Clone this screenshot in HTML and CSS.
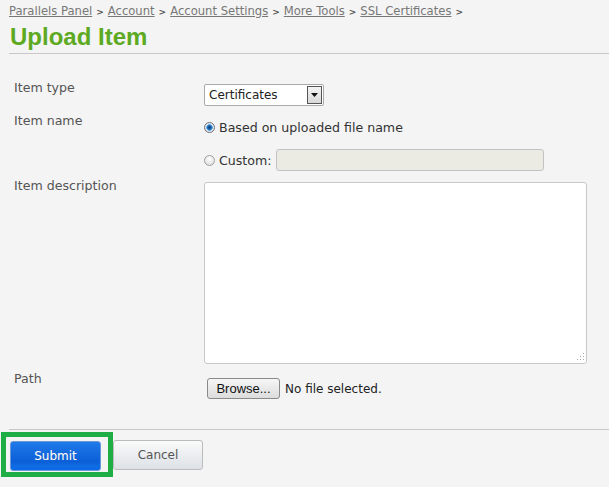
FILE: index.html
```html
<!DOCTYPE html>
<html lang="en">
<head>
    <meta charset="UTF-8">
    <title>Upload Item</title>
    <link rel="stylesheet" href="styles.css">
</head>
<body>
    <div class="header">
        <div class="crumbs"><a href="#">Parallels Panel</a><span class="sep">&gt;</span><a href="#">Account</a><span class="sep">&gt;</span><a href="#">Account Settings</a><span class="sep">&gt;</span><a href="#">More Tools</a><span class="sep">&gt;</span><a href="#">SSL Certificates</a><span class="sep">&gt;</span></div>
        <h1>Upload Item</h1>
    </div>

    <form class="form">
        <div class="row row-type">
            <label class="label">Item type</label>
            <div class="field">
                <div class="select">
                    <span>Certificates</span>
                    <span class="arrow">
                        <svg width="7" height="4" viewBox="0 0 7 4"><path d="M0 0h7L3.5 4z" fill="#111"/></svg>
                    </span>
                </div>
            </div>
        </div>

        <div class="row row-name">
            <label class="label">Item name</label>
            <div class="field">
                <div class="radio-line">
                    <span class="radio checked"></span>
                    <span>Based on uploaded file name</span>
                </div>
                <div class="radio-line custom">
                    <span class="radio"></span>
                    <span>Custom:</span>
                    <span class="text-input"></span>
                </div>
            </div>
        </div>

        <div class="row row-desc">
            <label class="label">Item description</label>
            <div class="field">
                <div class="textarea">
                    <svg class="grip" width="9" height="9" viewBox="0 0 9 9">
                        <rect x="7" y="0" width="1" height="1" fill="#aaa"/>
                        <rect x="4" y="3" width="1" height="1" fill="#aaa"/>
                        <rect x="7" y="3" width="1" height="1" fill="#aaa"/>
                        <rect x="1" y="6" width="1" height="1" fill="#aaa"/>
                        <rect x="4" y="6" width="1" height="1" fill="#aaa"/>
                        <rect x="7" y="6" width="1" height="1" fill="#aaa"/>
                    </svg>
                </div>
            </div>
        </div>

        <div class="row row-path">
            <label class="label">Path</label>
            <div class="field file">
                <span class="browse">Browse...</span>
                <span class="nofile">No file selected.</span>
            </div>
        </div>
    </form>

    <div class="buttons">
        <div class="focus">
            <span class="btn btn-submit">Submit</span>
        </div>
        <span class="btn btn-cancel">Cancel</span>
    </div>
</body>
</html>
```

FILE: styles.css
```css
body {
    margin: 0;
    background: #f4f4f4;
    font-family: "DejaVu Sans", Verdana, sans-serif;
    font-size: 12px;
    color: #444;
    width: 609px;
    height: 487px;
    overflow: hidden;
}

.header {
    margin-left: 9px;
    padding-top: 3px;
    border-bottom: 1px solid #c8c8c8;
    height: 50px;
}

.crumbs {
    font-size: 11.6px;
    line-height: 16px;
}

.crumbs a {
    color: #777;
    text-decoration: underline;
}

.sep {
    font-size: 9px;
    font-weight: bold;
    color: #555;
    margin: 0 4px 0 4px;
}

h1 {
    margin: 3px 0 0 1px;
    font-family: "Liberation Sans", Arial, sans-serif;
    font-size: 24px;
    font-weight: bold;
    color: #5ea922;
    line-height: 27px;
}

.form {
    padding: 26px 0 0 14px;
}

.row {
    display: flex;
}

.label {
    width: 190px;
    font-size: 12.6px;
    color: #555;
    line-height: 16px;
}

.field {
    flex: 1;
}

.row-type .field {
    padding-top: 4px;
}

.select {
    width: 120px;
    height: 22px;
    border: 1px solid #aaa;
    border-radius: 2px;
    background: #fff;
    display: flex;
    justify-content: space-between;
    align-items: center;
    padding-left: 4px;
    box-sizing: border-box;
    font-size: 12px;
    color: #222;
}

.arrow {
    width: 15px;
    height: 18px;
    margin-right: 1px;
    border: 1px solid #555;
    box-sizing: border-box;
    background: linear-gradient(#f4f4f4, #d8d8d8);
    display: flex;
    align-items: center;
    justify-content: center;
}

.row-name {
    margin-top: 7px;
}

.row-name .field {
    padding-top: 3px;
}

.radio-line {
    display: flex;
    align-items: center;
    height: 22px;
    color: #333;
    font-size: 12.6px;
}

.radio-line.custom {
    margin-top: 11px;
}

.radio {
    width: 11px;
    height: 11px;
    border-radius: 50%;
    border: 1px solid #a0a0a0;
    background: radial-gradient(circle at 50% 35%, #fff, #d6d6d6);
    margin-right: 4px;
    box-sizing: border-box;
}

.radio.checked {
    border-color: #6a7080;
    background: radial-gradient(circle, #1f2f50 0, #1d6fbf 2px, #5aa6e6 3px, #f2f2f2 3.6px, #d8d8d8 5px);
}

.text-input {
    width: 268px;
    height: 22px;
    margin-left: 4px;
    border: 1px solid #c2c2c2;
    border-radius: 3px;
    background: #ebebe4;
    box-sizing: border-box;
}

.row-desc {
    margin-top: 7px;
}

.row-desc .field {
    padding-top: 4px;
}

.textarea {
    position: relative;
    width: 383px;
    height: 182px;
    background: #fff;
    border: 1px solid #c8c8c8;
    border-radius: 3px;
    box-sizing: border-box;
}

.grip {
    position: absolute;
    right: 1px;
    bottom: 1px;
}

.row-path {
    margin-top: 7px;
}

.file {
    display: flex;
    align-items: center;
    padding-left: 3px;
    padding-top: 7px;
    align-self: flex-start;
}

.browse {
    display: inline-block;
    width: 73px;
    height: 21px;
    line-height: 19px;
    box-sizing: border-box;
    text-align: center;
    border: 1px solid #8a8a8a;
    border-radius: 3px;
    background: linear-gradient(#f6f6f6, #dcdcdc);
    font-family: "Liberation Sans", Arial, sans-serif;
    font-size: 13px;
    color: #111;
}

.nofile {
    margin-left: 5px;
    font-size: 12px;
    color: #222;
}

.buttons {
    margin-top: 30px;
    margin-left: 9px;
    border-top: 1px solid #c8c8c8;
    display: flex;
    align-items: flex-start;
    padding-top: 2px;
}

.focus {
    margin-left: -8px;
    border: 5px solid #1fad45;
    padding: 4px 7px 1px 4px;
    background: #f4f4f4;
}

.btn {
    display: block;
    height: 30px;
    line-height: 28px;
    box-sizing: border-box;
    text-align: center;
    font-size: 12px;
    border-radius: 3px;
}

.btn-submit {
    width: 91px;
    color: #fff;
    border: 1px solid #6a98d8;
    background: linear-gradient(#1f7ae8 0, #0b5fd8 70%, #1478ea 100%);
    box-shadow: inset 0 -3px 0 #0c6ae6;
    text-shadow: 0 0 1px #3a6fb8;
}

.btn-cancel {
    width: 90px;
    margin-top: 8px;
    color: #555;
    border: 1px solid #bbb;
    background: linear-gradient(#fafafa, #dde1e6);
}
```
